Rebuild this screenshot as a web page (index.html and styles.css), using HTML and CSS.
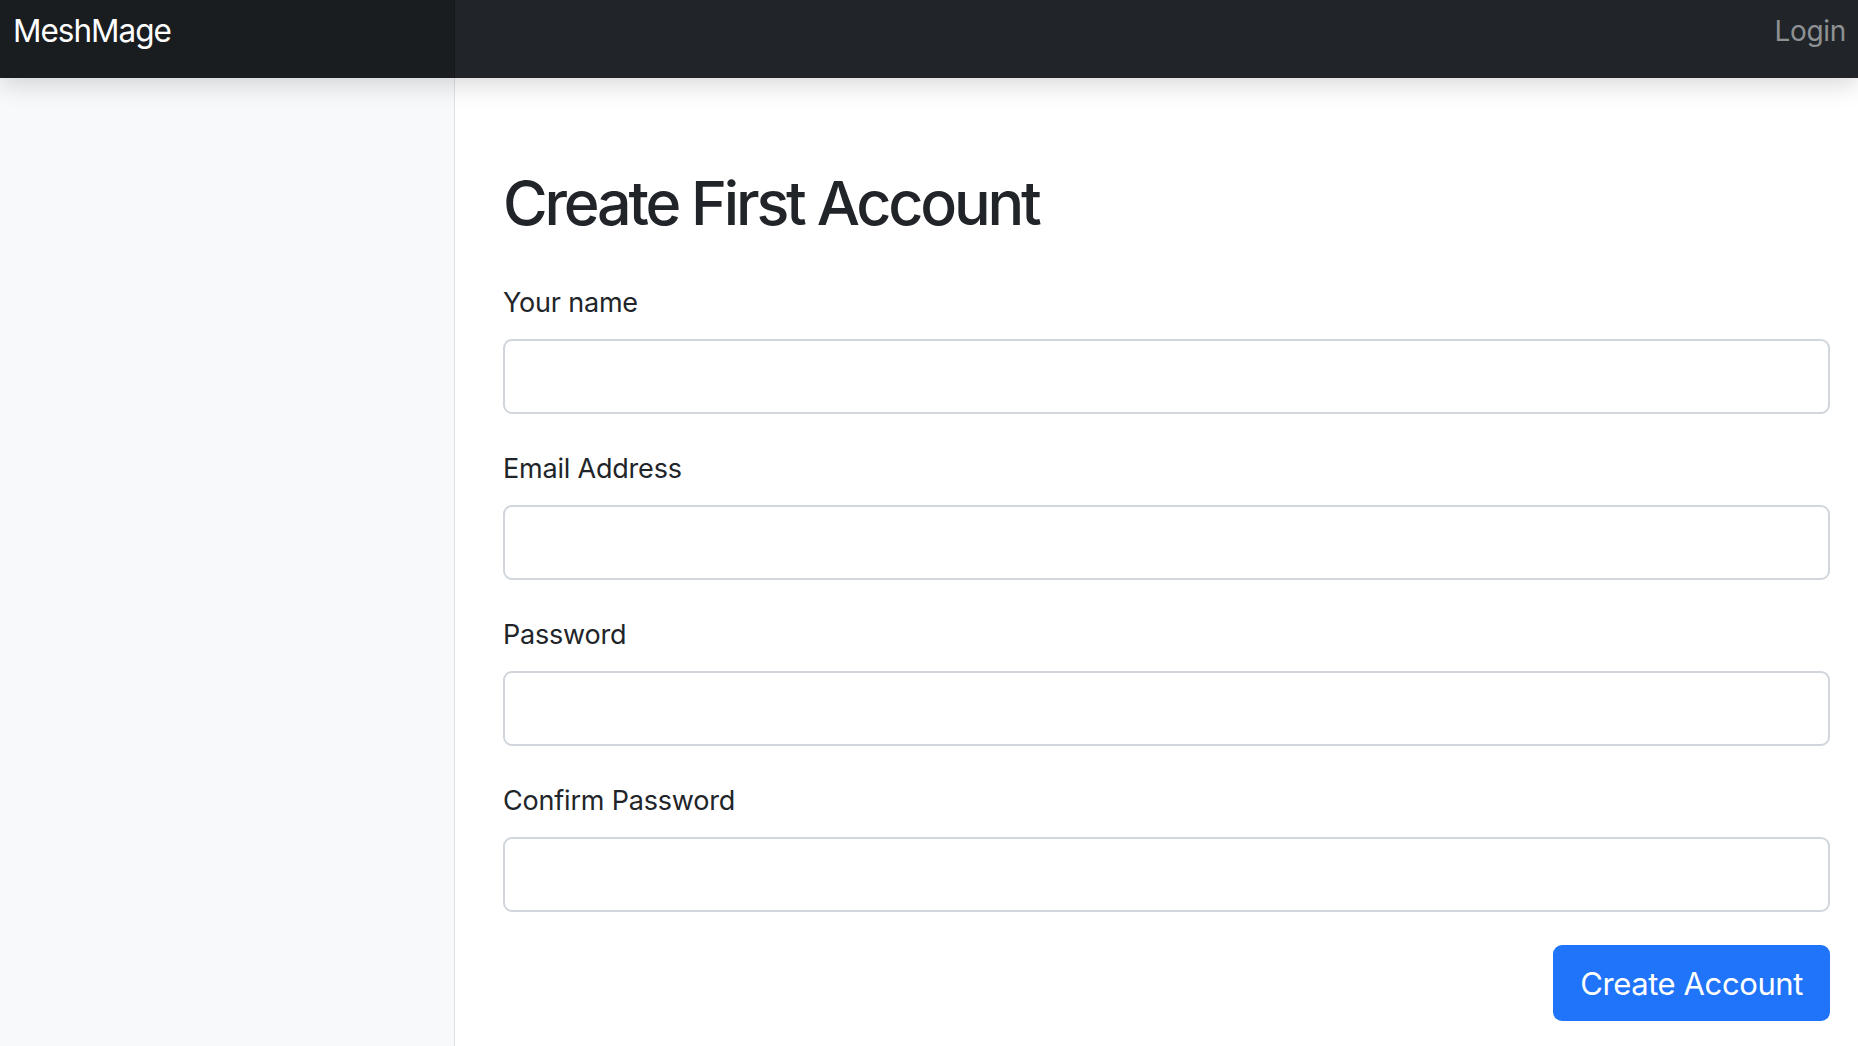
FILE: index.html
```html
<!DOCTYPE html>
<html lang="en">
<head>
<meta charset="utf-8">
<title>MeshMage - Create First Account</title>
<link rel="stylesheet" href="styles.css">
</head>
<body>
<header class="topbar">
  <div class="brand-area"><a class="brand" href="#">MeshMage</a></div>
  <nav class="topnav"><a class="nav-link" href="#">Login</a></nav>
</header>
<div class="layout">
  <aside class="sidebar"></aside>
  <main class="content">
    <h1 class="title">Create First Account</h1>
    <form class="form">
      <div class="field">
        <label class="label" for="name">Your name</label>
        <input class="input" id="name" type="text">
      </div>
      <div class="field">
        <label class="label" for="email">Email Address</label>
        <input class="input" id="email" type="email">
      </div>
      <div class="field">
        <label class="label" for="password">Password</label>
        <input class="input" id="password" type="password">
      </div>
      <div class="field">
        <label class="label" for="confirm">Confirm Password</label>
        <input class="input" id="confirm" type="password">
      </div>
      <div class="actions">
        <button class="btn-primary" type="submit">Create Account</button>
      </div>
    </form>
  </main>
</div>
</body>
</html>
```
FILE: styles.css
```css
* { box-sizing: border-box; }
html, body { height: 100%; }
body {
  margin: 0;
  font-family: Inter, "Noto Sans", "Liberation Sans", sans-serif;
  color: #212529;
  background: #fff;
  overflow: hidden;
  display: flex;
  flex-direction: column;
}
.topbar {
  position: relative;
  z-index: 2;
  display: flex;
  height: 78px;
  background: #212529;
  box-shadow: 0 6px 24px rgba(0, 0, 0, 0.16);
  flex: none;
}
.brand-area {
  width: 455px;
  background: #1a1d20;
  border-right: 1px solid #16181b;
  padding-left: 13px;
  padding-top: 10px;
}
.brand {
  color: #fff;
  text-decoration: none;
  font-size: 31.5px;
  line-height: 42px;
  letter-spacing: -1px;
}
.topnav {
  flex: 1;
  display: flex;
  justify-content: flex-end;
  padding-right: 12px;
  padding-top: 11px;
}
.nav-link {
  color: #8e9194;
  text-decoration: none;
  font-size: 28px;
  line-height: 40px;
  letter-spacing: -0.3px;
}
.layout {
  flex: 1;
  display: flex;
  min-height: 0;
}
.sidebar {
  width: 455px;
  flex: none;
  background: #f8f9fa;
  border-right: 1px solid #dee2e6;
}
.content {
  flex: 1;
  padding: 87px 28px 0 48px;
}
.title {
  margin: 0 0 40px;
  font-size: 61px;
  line-height: 77px;
  font-weight: 500;
  letter-spacing: -3.2px;
}
.field { margin-bottom: 34px; }
.label {
  display: block;
  font-size: 27px;
  line-height: 42px;
  margin-bottom: 15px;
  letter-spacing: -0.2px;
}
.input {
  display: block;
  width: 100%;
  height: 75px;
  border: 2px solid #d1d6dc;
  border-radius: 9px;
  background: #fff;
  font: inherit;
  font-size: 28px;
  padding: 0 20px;
}
.actions {
  display: flex;
  justify-content: flex-end;
  margin-top: -1px;
}
.btn-primary {
  height: 76px;
  padding: 0 27px;
  border: none;
  border-radius: 9px;
  background: #1f74fa;
  color: #fff;
  font-family: inherit;
  font-size: 31px;
  letter-spacing: -0.4px;
}
```
